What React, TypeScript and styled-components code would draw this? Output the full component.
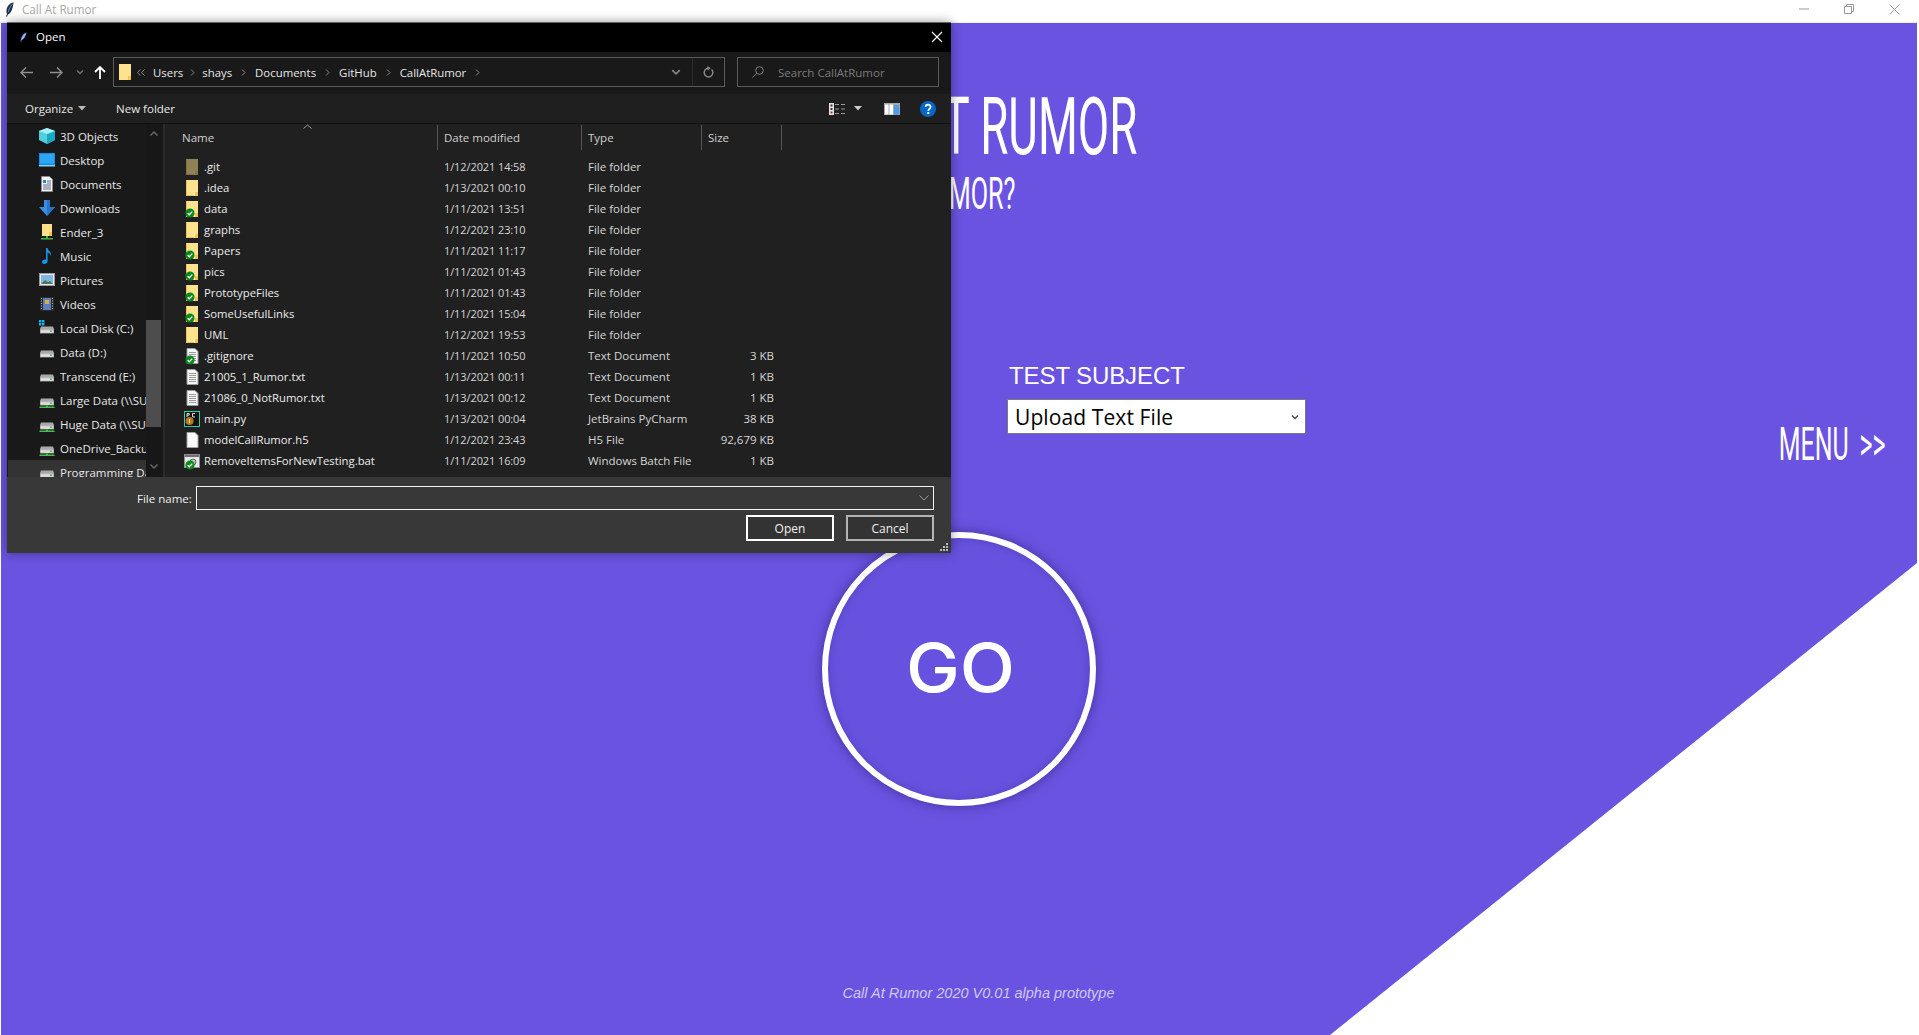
import React from "react";
import styled, { createGlobalStyle } from "styled-components";

const Global = createGlobalStyle`
  html, body { margin: 0; padding: 0; background: #fff; overflow: hidden; }
  * { box-sizing: border-box; }
`;

const Page = styled.div`
  position: relative;
  width: 1919px;
  height: 1035px;
  overflow: hidden;
  background: #fff;
  display: flex;
  flex-direction: column;
`;

const AppBar = styled.header`
  height: 23px;
  flex: none;
  display: flex;
  align-items: center;
  padding: 0 19px 4px 5px;
  background: #fff;
  border-bottom: 1px solid #f0f0f0;
  font: 11.7px "Open Sans", sans-serif;
  color: #a8a8a8;
`;
const AppTitle = styled.span`
  margin-left: 8px;
  flex: 1;
`;
const WinControls = styled.div`
  display: flex;
  gap: 35px;
  align-items: center;
`;

const Canvas = styled.main`
  flex: 1;
  margin: 0 2px 0 1px;
  background: #6a53e0;
  clip-path: polygon(0 0, 100% 0, 100% 540px, 1329px 100%, 0 100%);
  display: flex;
  flex-direction: column;
  padding-top: 76px;
  color: #fff;
`;
const Headline = styled.h1`
  margin: 0;
  width: 1136px;
  text-align: right;
  font: 400 79px/56px Roboto, sans-serif;
  white-space: nowrap;
`;
const SubHeadline = styled.h2`
  margin: 23px 0 0;
  width: 1015px;
  text-align: right;
  font: 400 45px/32px Roboto, sans-serif;
  white-space: nowrap;
`;
const Squeeze = styled.span<{ $x: number }>`
  display: inline-block;
  transform: scaleX(${(p) => p.$x});
  transform-origin: right center;
`;
const ControlRow = styled.section`
  margin-top: 157px;
  height: 91px;
  padding: 0 31px 0 1006px;
  display: flex;
  justify-content: space-between;
`;
const SubjectField = styled.div`
  width: 299px;
  display: flex;
  flex-direction: column;
`;
const SubjectLabel = styled.label`
  margin-left: 2px;
  font: 24px/17px "Liberation Sans", sans-serif;
  letter-spacing: -0.1px;
  white-space: nowrap;
`;
const SubjectSelect = styled.div`
  margin-top: 15px;
  height: 35px;
  padding: 0 6px 0 7px;
  display: flex;
  align-items: center;
  justify-content: space-between;
  background: #fff;
  border: 1px solid #7a7a7a;
  color: #000;
  font: 21px "Open Sans", sans-serif;
  letter-spacing: 0.1px;
`;
const MenuLink = styled.a`
  margin-top: 60px;
  font: 400 47px/33px Roboto, sans-serif;
  word-spacing: 9px;
  white-space: nowrap;
  height: 33px;
`;
const GoButton = styled.button`
  margin-top: 74px;
  align-self: center;
  width: 274px;
  height: 274px;
  flex: none;
  padding: 0 0 4px 2px;
  border: 6px solid #fff;
  border-radius: 50%;
  background: #6652de;
  color: #fff;
  font: 500 68px Inter, sans-serif;
  box-shadow: 0 0 12px rgba(40, 25, 110, 0.6), inset 0 0 8px rgba(40, 25, 110, 0.25);
`;
const GoLabel = styled.span`
  display: inline-block;
  transform: scaleX(1.06);
`;
const Credit = styled.footer`
  margin-top: 177px;
  padding-left: 39px;
  text-align: center;
  font: italic 14.5px/20px "Liberation Sans", sans-serif;
  color: #cfc9f4;
`;

const Dialog = styled.div`
  position: absolute;
  left: 7px;
  top: 22px;
  width: 944px;
  height: 531px;
  display: flex;
  flex-direction: column;
  background: #202020;
  box-shadow: 0 0 10px rgba(0, 0, 0, 0.4);
  border-top: 1px solid #666;
  font: 11.5px "Open Sans", sans-serif;
  color: #e8e8e8;
`;
const DialogTitle = styled.div`
  height: 29px;
  flex: none;
  background: #000;
  color: #fff;
  display: flex;
  align-items: center;
  padding: 0 8px 2px 13px;
  font-size: 11.5px;
`;
const DialogName = styled.span`
  flex: 1;
  margin-left: 9px;
`;
const NavBar = styled.div`
  height: 42px;
  flex: none;
  background: #191919;
  display: flex;
  align-items: center;
  padding: 0 0 2px 13px;
`;
const NavButton = styled.span<{ $w: number }>`
  width: ${(p) => p.$w}px;
  display: flex;
  align-items: center;
  flex: none;
`;
const AddressBox = styled.div`
  width: 612px;
  height: 30px;
  border: 1px solid #5a5a5a;
  display: flex;
  align-items: center;
  padding-left: 5px;
  font-size: 11.4px;
`;
const Crumb = styled.span<{ $m?: number }>`
  margin-left: ${(p) => p.$m ?? 9}px;
  display: flex;
  align-items: center;
  white-space: nowrap;
`;
const AddressEnd = styled.div`
  margin-left: auto;
  display: flex;
  height: 100%;
  align-items: center;
`;
const ChevronCell = styled.span`
  width: 33px;
  height: 100%;
  display: flex;
  align-items: center;
  justify-content: center;
  border-right: 1px solid #2c2c2c;
`;
const RefreshCell = styled.span`
  width: 31px;
  display: flex;
  justify-content: center;
`;
const SearchBox = styled.div`
  width: 202px;
  height: 30px;
  margin-left: 12px;
  border: 1px solid #5a5a5a;
  display: flex;
  align-items: center;
  gap: 14px;
  padding-left: 14px;
  color: #7c7c7c;
  font-size: 11.5px;
`;
const ToolBar = styled.div`
  height: 30px;
  flex: none;
  background: #1f1f1f;
  border-bottom: 1px solid #111;
  display: flex;
  align-items: center;
  padding: 0 15px 0 18px;
  color: #e8e8e8;
`;
const ToolItem = styled.span<{ $gap?: number; $inner?: number }>`
  display: flex;
  align-items: center;
  gap: ${(p) => p.$inner ?? 5}px;
  margin-right: ${(p) => p.$gap ?? 0}px;
  white-space: nowrap;
`;
const ToolSpacer = styled.span`
  flex: 1;
`;
const Body = styled.div`
  height: 353px;
  flex: none;
  display: flex;
  background: #202020;
`;
const Sidebar = styled.nav`
  width: 156px;
  flex: none;
  display: flex;
  background: #191919;
  overflow: hidden;
`;
const NavList = styled.ul`
  margin: 0;
  padding: 0;
  list-style: none;
  width: 139px;
  flex: none;
  overflow: hidden;
`;
const NavRow = styled.li<{ $active?: boolean }>`
  height: 24px;
  display: flex;
  align-items: center;
  gap: 5px;
  padding-left: 31px;
  margin-left: 1px;
  white-space: nowrap;
  background: ${(p) => (p.$active ? "#333" : "transparent")};
`;
const Scrollbar = styled.div`
  width: 15px;
  flex: none;
  display: flex;
  flex-direction: column;
  align-items: center;
  background: #171717;
`;
const ScrollArrow = styled.span<{ $top: number }>`
  margin-top: ${(p) => p.$top}px;
  line-height: 0;
`;
const ScrollThumb = styled.div`
  width: 15px;
  height: 107px;
  margin-top: 184px;
  background: #4d4d4d;
`;
const Split = styled.div`
  width: 2px;
  flex: none;
  background: #2a2a2a;
`;
const FileArea = styled.div`
  flex: 1;
  min-width: 0;
`;
const ColumnHead = styled.div`
  height: 26px;
  display: grid;
  grid-template-columns: 273px 144px 120px 80px;
  color: #d0d0d0;
  position: relative;
`;
const HeadCell = styled.span<{ $pad: number }>`
  display: flex;
  align-items: center;
  padding-left: ${(p) => p.$pad}px;
  border-right: 1px solid #555;
  margin-top: 1px;
`;
const SortMark = styled.span`
  position: absolute;
  left: 138px;
  top: 0;
  line-height: 0;
`;
const FileList = styled.ul`
  margin: 6px 0 0;
  padding: 0;
  list-style: none;
`;
const FileRow = styled.li`
  height: 21px;
  display: grid;
  grid-template-columns: 273px 144px 120px 80px;
  align-items: center;
  white-space: nowrap;
  color: #d6d6d6;
`;
const NameCell = styled.span`
  display: flex;
  align-items: center;
  gap: 3px;
  padding-left: 20px;
  color: #ececec;
  font-size: 11.3px;
`;
const DateCell = styled.span`
  padding-left: 6px;
  font-size: 11px;
  letter-spacing: -0.1px;
`;
const TypeCell = styled.span`
  padding-left: 6px;
`;
const SizeCell = styled.span`
  padding-right: 8px;
  text-align: right;
`;
const BottomPanel = styled.div`
  height: 76px;
  flex: none;
  background: #383838;
  padding: 9px 17px 0 0;
  display: flex;
  flex-direction: column;
  position: relative;
`;
const FileNameRow = styled.div`
  display: flex;
  align-items: center;
  padding-left: 130px;
  gap: 4px;
  color: #f0f0f0;
`;
const FileNameInput = styled.div`
  flex: 1;
  height: 24px;
  border: 1px solid #f4f4f4;
  display: flex;
  align-items: center;
  justify-content: flex-end;
  padding-right: 4px;
`;
const ButtonRow = styled.div`
  display: flex;
  justify-content: flex-end;
  gap: 12px;
  margin-top: 5px;
`;
const DialogButton = styled.button<{ $primary?: boolean }>`
  width: 88px;
  height: 26px;
  background: #333;
  color: #f0f0f0;
  border: 2px solid ${(p) => (p.$primary ? "#fff" : "#b4b4b4")};
  padding: 0;
  font: 12px "Open Sans", sans-serif;
`;
const Grip = styled.span`
  position: absolute;
  right: 3px;
  bottom: 2px;
  line-height: 0;
`;

const Feather = ({ dark }: { dark?: boolean }) =>
  dark ? (
    <svg width="9" height="15" viewBox="0 0 9 15">
      <path d="M8.5.5C5 1 2 4 1.5 8c-.2 1.6 0 3 .6 3.8L1 14.5l1 .3.9-2.4C5.5 12 8 7 8.5.5z" fill="#20304c" />
      <path d="M7.5 2C5.5 4 4 7 3.2 10" stroke="#6f8fc4" fill="none" />
    </svg>
  ) : (
    <svg width="7" height="10" viewBox="0 0 7 10">
      <path d="M6.5.2C4 1 1.5 4 1 7L.3 9.6l.8.1.6-1.8C4 7.5 6 4 6.5.2z" fill="#5f93e6" />
      <path d="M5 2L2 7.5" stroke="#dfe9fb" strokeWidth=".7" />
    </svg>
  );

const Folder = ({ dim }: { dim?: boolean }) => (
  <svg width="13" height="16" viewBox="0 0 13 16" opacity={dim ? 0.5 : 1}>
    <path d="M0 0h12v16H0z" fill="#ffe28e" />
    <path d="M0 0h1v16H0zM0 15h12v1H0z" fill="#eec257" />
    <path d="M9 12h3v4H9z" fill="#f5c64f" />
    <path d="M8 11h1v5H8z" fill="#fff2c0" />
  </svg>
);

const Lines = () => (
  <g stroke="#9a9a9a" strokeWidth="1">
    <path d="M2.5 4.5h7M2.5 6.5h7M2.5 8.5h7M2.5 10.5h7M2.5 12.5h7" />
  </g>
);
const TextDoc = () => (
  <svg width="13" height="16" viewBox="0 0 12 16">
    <path d="M.5.5h8l3 3v12H.5z" fill="#f7f7f7" stroke="#9b9b9b" />
    <Lines />
  </svg>
);
const BlankDoc = () => (
  <svg width="13" height="16" viewBox="0 0 12 16">
    <path d="M.5.5h8l3 3v12H.5z" fill="#fafafa" stroke="#a0a0a0" />
  </svg>
);
const PyDoc = () => (
  <svg width="16" height="16" viewBox="0 0 16 16">
    <rect x=".5" y=".5" width="15" height="15" fill="#111" stroke="#27d3a5" />
    <path d="M3 6V2.500h2.200v1.700H3M11 2.500H8.500v3.400H11" stroke="#ddd" fill="none" />
    <circle cx="5.500" cy="10" r="4" fill="#b9791c" />
    <path d="M5.500 8v4" stroke="#f1d9ad" />
  </svg>
);
const BatDoc = () => (
  <svg width="16" height="14" viewBox="0 0 16 14">
    <rect x=".5" y=".5" width="15" height="13" fill="#e9e9e9" stroke="#8e8e8e" />
    <rect x="1" y="1" width="14" height="2" fill="#6d7075" />
    <circle cx="9" cy="8" r="3" fill="#b7bcc0" stroke="#666" />
  </svg>
);
const SyncWrap = styled.span`
  position: absolute;
  left: 0;
  bottom: -1px;
  line-height: 0;
`;
const SyncBadge = () => (
  <SyncWrap>
    <svg width="10" height="10" viewBox="0 0 10 10">
      <circle cx="5" cy="5" r="4.600" fill="#0a8a1a" />
      <path d="M2.700 5.200l1.600 1.600 3-3.200" stroke="#fff" strokeWidth="1.300" fill="none" />
    </svg>
  </SyncWrap>
);
const IconSlot = styled.span`
  position: relative;
  width: 16px;
  height: 16px;
  flex: none;
  display: flex;
  align-items: center;
  justify-content: flex-start;
`;
const DocShift = styled.span<{ $wide?: boolean }>`
  margin-left: ${(p) => (p.$wide ? -1 : 1)}px;
  line-height: 0;
`;

type Kind = "folder" | "dim" | "text" | "blank" | "py" | "bat";
const FileIcon = ({ kind, sync }: { kind: Kind; sync?: boolean }) => (
  <IconSlot>
    <DocShift $wide={kind === "py" || kind === "bat"}>
      {kind === "folder" && <Folder />}
      {kind === "dim" && <Folder dim />}
      {kind === "text" && <TextDoc />}
      {kind === "blank" && <BlankDoc />}
      {kind === "py" && <PyDoc />}
      {kind === "bat" && <BatDoc />}
    </DocShift>
    {sync && <SyncBadge />}
  </IconSlot>
);

const Drive = ({ net, win }: { net?: boolean; win?: boolean }) => (
  <svg width="16" height="16" viewBox="0 0 16 16">
    {win && <path d="M0 0h2.400v2.400H0zM3 0h2.400v2.400H3zM0 3h2.400v2.400H0zM3 3h2.400v2.400H3z" fill="#19b2f0" />}
    <path d="M2 6.500h12L15 9H1z" fill="#a9a9a9" />
    <rect x="1" y="9" width="14" height="4.500" fill="#8f8f8f" />
    <rect x="1.500" y="9.500" width="13" height="3.500" fill="#d8d8d8" />
    <rect x="11" y="10.500" width="2" height="1.300" fill="#27b04a" />
    {net && <path d="M7 13.500h2v1h6.500V16H.5v-1.500H7z" fill="#46c14e" />}
  </svg>
);
const SideIcon = ({ name }: { name: string }) => {
  switch (name) {
    case "cube":
      return (
        <svg width="16" height="16" viewBox="0 0 16 16">
          <path d="M8 0l8 3v9l-8 4-8-4V3z" fill="#4fd0dc" />
          <path d="M8 6v10l8-4V3z" fill="#19a8c4" />
          <path d="M8 0l8 3-8 3-8-3z" fill="#a6eef2" />
        </svg>
      );
    case "desktop":
      return (
        <svg width="16" height="14" viewBox="0 0 16 14">
          <rect x="0" y="0" width="16" height="12" fill="#0f8de8" />
          <rect x="1" y="1" width="14" height="9.500" fill="#2da6f4" />
          <rect x="0" y="12" width="16" height="1.500" fill="#8fd0f7" />
        </svg>
      );
    case "docs":
      return (
        <svg width="16" height="16" viewBox="0 0 16 16">
          <path d="M2.500.5h8l3 3v12h-11z" fill="#f4f4f4" stroke="#8a8a8a" />
          <path d="M4 4h3v3H4z" fill="#2a7fd0" />
          <path d="M8 5h4M8 7h4M4 9h8M4 11h8M4 13h8" stroke="#5c6f86" />
        </svg>
      );
    case "down":
      return (
        <svg width="16" height="16" viewBox="0 0 16 16">
          <path d="M5 0h6v7h5l-8 9-8-9h5z" fill="#3b8fe0" />
          <path d="M8 0h3v7h5l-8 9z" fill="#2675c6" />
        </svg>
      );
    case "ender":
      return (
        <svg width="16" height="16" viewBox="0 0 16 16">
          <rect x="3" y="0" width="10" height="12" fill="#ffe08a" />
          <rect x="10" y="8" width="3" height="4" fill="#f2c34d" />
          <path d="M7 12h2v2h5v1.500H2V14h5z" fill="#3cb53f" />
        </svg>
      );
    case "music":
      return (
        <svg width="16" height="16" viewBox="0 0 16 16">
          <path d="M7 0h1.600c.3 3 4.400 3.600 3.400 8-.4-2-2-3.200-3.400-3.500V13c0 1.800-1.600 3-3.500 3C3.900 16 3 15.200 3 14c0-1.500 1.800-2.700 4-2.300z" fill="#1793ea" />
        </svg>
      );
    case "pics":
      return (
        <svg width="16" height="14" viewBox="0 0 16 14">
          <rect x=".5" y=".5" width="15" height="12" fill="#e8e8e8" stroke="#999" />
          <rect x="2" y="2" width="12" height="9" fill="#7fb6e6" />
          <path d="M2 11l4-4 3 2 2-1 3 3z" fill="#4d7a55" />
        </svg>
      );
    case "videos":
      return (
        <svg width="16" height="16" viewBox="0 0 16 16">
          <rect x="1" y="1" width="14" height="14" fill="#2b2b2b" />
          <rect x="4" y="2" width="8" height="12" fill="#5c7fc0" />
          <rect x="6" y="4" width="4" height="4" fill="#d9b23c" />
          <path d="M2 2.500h1M2 5h1M2 7.500h1M2 10h1M2 12.500h1M13 2.500h1M13 5h1M13 7.500h1M13 10h1M13 12.500h1" stroke="#bbb" />
        </svg>
      );
    case "c":
      return <Drive win />;
    case "drive":
      return <Drive />;
    default:
      return <Drive net />;
  }
};

const sideItems: [string, string][] = [
  ["cube", "3D Objects"],
  ["desktop", "Desktop"],
  ["docs", "Documents"],
  ["down", "Downloads"],
  ["ender", "Ender_3"],
  ["music", "Music"],
  ["pics", "Pictures"],
  ["videos", "Videos"],
  ["c", "Local Disk (C:)"],
  ["drive", "Data (D:)"],
  ["drive", "Transcend (E:)"],
  ["net", "Large Data (\\\\SUPERSERVER)"],
  ["net", "Huge Data (\\\\SUPERSERVER)"],
  ["net", "OneDrive_Backup"],
  ["drive", "Programming Data"],
];

const files: { n: string; d: string; t: string; s: string; k: Kind; sync?: boolean }[] = [
  { n: ".git", d: "1/12/2021 14:58", t: "File folder", s: "", k: "dim" },
  { n: ".idea", d: "1/13/2021 00:10", t: "File folder", s: "", k: "folder" },
  { n: "data", d: "1/11/2021 13:51", t: "File folder", s: "", k: "folder", sync: true },
  { n: "graphs", d: "1/12/2021 23:10", t: "File folder", s: "", k: "folder" },
  { n: "Papers", d: "1/11/2021 11:17", t: "File folder", s: "", k: "folder", sync: true },
  { n: "pics", d: "1/11/2021 01:43", t: "File folder", s: "", k: "folder", sync: true },
  { n: "PrototypeFiles", d: "1/11/2021 01:43", t: "File folder", s: "", k: "folder", sync: true },
  { n: "SomeUsefulLinks", d: "1/11/2021 15:04", t: "File folder", s: "", k: "folder", sync: true },
  { n: "UML", d: "1/12/2021 19:53", t: "File folder", s: "", k: "folder" },
  { n: ".gitignore", d: "1/11/2021 10:50", t: "Text Document", s: "3 KB", k: "text", sync: true },
  { n: "21005_1_Rumor.txt", d: "1/13/2021 00:11", t: "Text Document", s: "1 KB", k: "text" },
  { n: "21086_0_NotRumor.txt", d: "1/13/2021 00:12", t: "Text Document", s: "1 KB", k: "text" },
  { n: "main.py", d: "1/13/2021 00:04", t: "JetBrains PyCharm", s: "38 KB", k: "py" },
  { n: "modelCallRumor.h5", d: "1/12/2021 23:43", t: "H5 File", s: "92,679 KB", k: "blank" },
  { n: "RemoveItemsForNewTesting.bat", d: "1/11/2021 16:09", t: "Windows Batch File", s: "1 KB", k: "bat", sync: true },
];

const Chev = ({ color = "#888", size = 8 }: { color?: string; size?: number }) => (
  <svg width={size} height={size} viewBox="0 0 8 8">
    <path d="M1 2.500l3 3 3-3" stroke={color} strokeWidth="1.300" fill="none" />
  </svg>
);
const CrumbSep = () => (
  <svg width="5" height="7" viewBox="0 0 5 7">
    <path d="M1 .5l3 3-3 3" stroke="#8a8a8a" fill="none" />
  </svg>
);
const Caret = ({ color = "#bbb" }: { color?: string }) => (
  <svg width="8" height="5" viewBox="0 0 8 5">
    <path d="M0 0h8L4 4.500z" fill={color} />
  </svg>
);

export default function App() {
  return (
    <Page>
      <Global />
      <AppBar>
        <Feather dark />
        <AppTitle>Call At Rumor</AppTitle>
        <WinControls>
          <svg width="10" height="10" viewBox="0 0 10 10">
            <path d="M0 5h10" stroke="#999" />
          </svg>
          <svg width="10" height="10" viewBox="0 0 10 10">
            <path d="M.5 2.500h7v7h-7zM2.500 2.500v-2h7v7h-2" stroke="#999" fill="none" />
          </svg>
          <svg width="11" height="11" viewBox="0 0 11 11">
            <path d="M.5.500l10 10M10.500.500l-10 10" stroke="#999" />
          </svg>
        </WinControls>
      </AppBar>
      <Canvas>
        <Headline>
          <Squeeze $x={0.578}>CALL AT RUMOR</Squeeze>
        </Headline>
        <SubHeadline>
          <Squeeze $x={0.56}>IS IT A RUMOR?</Squeeze>
        </SubHeadline>
        <ControlRow>
          <SubjectField>
            <SubjectLabel>TEST SUBJECT</SubjectLabel>
            <SubjectSelect>
              Upload Text File
              <Chev color="#444" />
            </SubjectSelect>
          </SubjectField>
          <MenuLink>
            <Squeeze $x={0.53}>MENU &gt;&gt;</Squeeze>
          </MenuLink>
        </ControlRow>
        <GoButton>
          <GoLabel>GO</GoLabel>
        </GoButton>
        <Credit>Call At Rumor 2020 V0.01 alpha prototype</Credit>
      </Canvas>

      <Dialog>
        <DialogTitle>
          <Feather />
          <DialogName>Open</DialogName>
          <svg width="12" height="12" viewBox="0 0 12 12">
            <path d="M1 1l10 10M11 1L1 11" stroke="#fff" strokeWidth="1.100" />
          </svg>
        </DialogTitle>
        <NavBar>
          <NavButton $w={30}>
            <svg width="13" height="11" viewBox="0 0 13 11">
              <path d="M6 .5l-5 5 5 5M1 5.500h12" stroke="#8e8e8e" strokeWidth="1.500" fill="none" />
            </svg>
          </NavButton>
          <NavButton $w={26}>
            <svg width="13" height="11" viewBox="0 0 13 11">
              <path d="M7 .5l5 5-5 5M12 5.500H0" stroke="#8e8e8e" strokeWidth="1.500" fill="none" />
            </svg>
          </NavButton>
          <NavButton $w={18}>
            <Chev color="#777" />
          </NavButton>
          <NavButton $w={19}>
            <svg width="12" height="13" viewBox="0 0 12 13">
              <path d="M1 6l5-5 5 5M6 1v12" stroke="#fff" strokeWidth="1.800" fill="none" />
            </svg>
          </NavButton>
          <AddressBox>
            <svg width="13" height="16" viewBox="0 0 13 16">
              <path d="M0 0h12v16H0z" fill="#ffe28e" />
              <path d="M9 12h3v4H9z" fill="#f5c64f" />
            </svg>
            <Crumb $m={5}>
              <svg width="8" height="7" viewBox="0 0 8 7">
                <path d="M3.500.5l-3 3 3 3M7.500.5l-3 3 3 3" stroke="#8a8a8a" fill="none" />
              </svg>
            </Crumb>
            <Crumb $m={8}>Users</Crumb>
            <Crumb $m={7}>
              <CrumbSep />
            </Crumb>
            <Crumb $m={7}>shays</Crumb>
            <Crumb>
              <CrumbSep />
            </Crumb>
            <Crumb>Documents</Crumb>
            <Crumb>
              <CrumbSep />
            </Crumb>
            <Crumb>GitHub</Crumb>
            <Crumb>
              <CrumbSep />
            </Crumb>
            <Crumb>CallAtRumor</Crumb>
            <Crumb>
              <CrumbSep />
            </Crumb>
            <AddressEnd>
              <ChevronCell>
                <Chev size={10} />
              </ChevronCell>
              <RefreshCell>
                <svg width="11" height="12" viewBox="0 0 11 12">
                  <path d="M8.500 3.500a4.300 4.300 0 1 1-3-1.200H7" stroke="#8a8a8a" strokeWidth="1.400" fill="none" />
                  <path d="M4.500 0l3 2.300-3 2.300z" fill="#8a8a8a" />
                </svg>
              </RefreshCell>
            </AddressEnd>
          </AddressBox>
          <SearchBox>
            <svg width="12" height="12" viewBox="0 0 12 12">
              <circle cx="7.500" cy="4.500" r="3.800" stroke="#808080" fill="none" />
              <path d="M4.800 7.200L.5 11.500" stroke="#808080" />
            </svg>
            Search CallAtRumor
          </SearchBox>
        </NavBar>
        <ToolBar>
          <ToolItem $gap={30}>
            Organize <Caret />
          </ToolItem>
          <ToolItem>New folder</ToolItem>
          <ToolSpacer />
          <ToolItem $gap={22} $inner={9}>
            <svg width="16" height="12" viewBox="0 0 16 12">
              <rect width="5" height="12" fill="#e4e4e4" />
              <path d="M1.500 1.500h2v2h-2zM1.500 5h2v2h-2z" fill="#333" />
              <path d="M1.500 8.500h2v2h-2z" fill="#c22" />
              <path d="M6 1.500h4M12 1.500h4M6 6h4M12 6h4M6 10.500h4M12 10.500h4" stroke="#999" />
            </svg>
            <Caret color="#ccc" />
          </ToolItem>
          <ToolItem $gap={20}>
            <svg width="16" height="12" viewBox="0 0 16 12">
              <rect width="16" height="12" fill="#a8a8a8" />
              <rect x="1" y="1.500" width="3.500" height="10" fill="#fff" />
              <rect x="5.500" y="1.500" width="3.500" height="10" fill="#fff" />
              <rect x="10" y="2" width="5" height="9.500" fill="#4a9be8" />
            </svg>
          </ToolItem>
          <svg width="16" height="16" viewBox="0 0 16 16">
            <circle cx="8" cy="8" r="8" fill="#0667c6" />
            <path d="M5.600 6c0-3.200 5-3.200 5 0 0 2-2.300 1.900-2.300 4" stroke="#fff" strokeWidth="1.700" fill="none" />
            <rect x="7.300" y="11" width="2" height="2" fill="#fff" />
          </svg>
        </ToolBar>
        <Body>
          <Sidebar>
            <NavList>
              {sideItems.map(([icon, label], i) => (
                <NavRow key={label} $active={i === sideItems.length - 1}>
                  <IconSlot>
                    <SideIcon name={icon} />
                  </IconSlot>
                  {label}
                </NavRow>
              ))}
            </NavList>
            <Scrollbar>
              <ScrollArrow $top={7}>
                <svg width="8" height="5" viewBox="0 0 8 5">
                  <path d="M.5 4.500L4 1l3.500 3.500" stroke="#666" strokeWidth="1.500" fill="none" />
                </svg>
              </ScrollArrow>
              <ScrollThumb />
              <ScrollArrow $top={37}>
                <svg width="8" height="5" viewBox="0 0 8 5">
                  <path d="M.5.500L4 4 7.500.500" stroke="#666" strokeWidth="1.500" fill="none" />
                </svg>
              </ScrollArrow>
            </Scrollbar>
          </Sidebar>
          <Split />
          <FileArea>
            <ColumnHead>
              <HeadCell $pad={17}>Name</HeadCell>
              <HeadCell $pad={6}>Date modified</HeadCell>
              <HeadCell $pad={6}>Type</HeadCell>
              <HeadCell $pad={6}>Size</HeadCell>
              <SortMark>
                <svg width="9" height="5" viewBox="0 0 9 5">
                  <path d="M.5 4.500l4-3.500 4 3.500" stroke="#9a9a9a" fill="none" />
                </svg>
              </SortMark>
            </ColumnHead>
            <FileList>
              {files.map((f) => (
                <FileRow key={f.n}>
                  <NameCell>
                    <FileIcon kind={f.k} sync={f.sync} />
                    {f.n}
                  </NameCell>
                  <DateCell>{f.d}</DateCell>
                  <TypeCell>{f.t}</TypeCell>
                  <SizeCell>{f.s}</SizeCell>
                </FileRow>
              ))}
            </FileList>
          </FileArea>
        </Body>
        <BottomPanel>
          <FileNameRow>
            File name:
            <FileNameInput>
              <svg width="10" height="6" viewBox="0 0 10 6">
                <path d="M.5.500L5 5 9.500.500" stroke="#999" fill="none" />
              </svg>
            </FileNameInput>
          </FileNameRow>
          <ButtonRow>
            <DialogButton $primary>Open</DialogButton>
            <DialogButton>Cancel</DialogButton>
          </ButtonRow>
          <Grip>
            <svg width="8" height="8" viewBox="0 0 8 8">
              <path d="M6 0h2v2H6zM3 3h2v2H3zM6 3h2v2H6zM0 6h2v2H0zM3 6h2v2H3zM6 6h2v2H6z" fill="#bbb" />
            </svg>
          </Grip>
        </BottomPanel>
      </Dialog>
    </Page>
  );
}
